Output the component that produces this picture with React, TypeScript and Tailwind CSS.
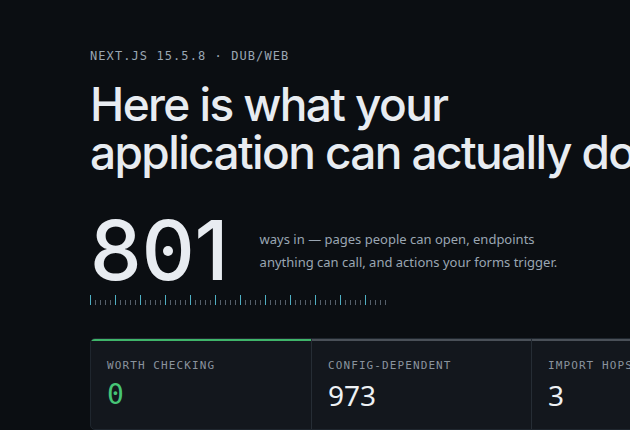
const ticks = Array.from({ length: 60 }, (_, i) => i);

const stats = [
  { label: 'WORTH CHECKING', value: '0', accent: true },
  { label: 'CONFIG-DEPENDENT', value: '973', accent: false },
  { label: 'IMPORT HOPS', value: '3', accent: false },
  { label: 'ROUTES', value: '801', accent: false },
];

export default function App() {
  return (
    <div className="w-[630px] h-[430px] overflow-hidden bg-[#0b0e12] pl-[90px] pt-[48px]">
      {/* Eyebrow */}
      <div
        className="text-[12px] leading-[16px] tracking-[0.09em] text-[#9aa6b2]"
        style={{ fontFamily: '"DejaVu Sans Mono", monospace' }}
      >
        NEXT.JS 15.5.8 · DUB/WEB
      </div>

      {/* Heading */}
      <h1
        className="mt-[16px] whitespace-nowrap text-[46px] leading-[48px] font-medium tracking-[-0.035em] text-[#e8ecf1]"
        style={{ fontFamily: 'Inter, sans-serif' }}
      >
        Here is what your
        <br />
        application can actually do
      </h1>

      {/* Big number */}
      <div className="mt-[40px] flex items-center gap-[31px]">
        <div
          className="text-[82px] leading-[70px] font-medium tracking-normal text-[#e8ecf1]"
          style={{ fontFamily: 'Inter, sans-serif' }}
        >
          8
          <span className="relative">
            0
            <span className="absolute left-1/2 top-1/2 w-[10px] h-[10px] -translate-x-1/2 -translate-y-1/2 rounded-full bg-[#e8ecf1]" />
          </span>
          1
        </div>
        <p
          className="text-[13px] leading-[23px] text-[#9aa6b2]"
          style={{ fontFamily: '"Noto Sans", sans-serif' }}
        >
          ways in — pages people can open, endpoints
          <br />
          anything can call, and actions your forms trigger.
        </p>
      </div>

      {/* Tick ruler */}
      <div className="mt-[9px] flex items-end gap-[4px] h-[10px]">
        {ticks.map((i) =>
          i % 5 === 0 ? (
            <div key={i} className="w-px h-[10px] bg-[#4fb0c4]" />
          ) : (
            <div key={i} className="w-px h-[5px] bg-[#56606b]" />
          )
        )}
      </div>

      {/* Stat cards */}
      <div className="mt-[33px] flex w-[880px] rounded-[5px] border border-[#1f262e] bg-[#13171d] overflow-hidden">
        {stats.map((s, i) => (
          <div
            key={s.label}
            className={`w-[220px] shrink-0 h-[90px] ${i > 0 ? 'border-l border-[#262d35]' : ''}`}
          >
            <div className={`h-[2px] ${s.accent ? 'bg-[#3fb56a]' : 'bg-[#4a5058]'}`} />
            <div className="px-[16px] pt-[18px]">
              <div
                className="text-[11px] leading-[14px] tracking-[0.1em] text-[#8a939d]"
                style={{ fontFamily: '"DejaVu Sans Mono", monospace' }}
              >
                {s.label}
              </div>
              <div
                className={`mt-[6px] text-[28px] leading-[32px] ${s.accent ? 'text-[#46c476]' : 'text-[#eef1f4]'}`}
                style={{
                  fontFamily: s.accent ? '"DejaVu Sans Mono", monospace' : '"Noto Sans", sans-serif',
                }}
              >
                {s.value}
              </div>
            </div>
          </div>
        ))}
      </div>
    </div>
  );
}
